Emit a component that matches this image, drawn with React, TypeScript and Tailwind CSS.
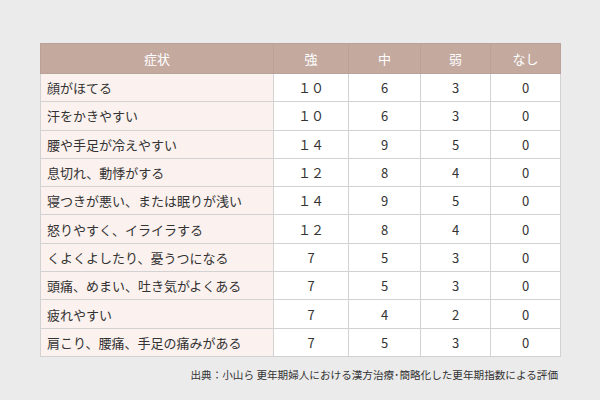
import React from "react";

const rows: [string, string, string, string, string][] = [
  ["顔がほてる", "１０", "6", "3", "0"],
  ["汗をかきやすい", "１０", "6", "3", "0"],
  ["腰や手足が冷えやすい", "１４", "9", "5", "0"],
  ["息切れ、動悸がする", "１２", "8", "4", "0"],
  ["寝つきが悪い、または眠りが浅い", "１４", "9", "5", "0"],
  ["怒りやすく、イライラする", "１２", "8", "4", "0"],
  ["くよくよしたり、憂うつになる", "7", "5", "3", "0"],
  ["頭痛、めまい、吐き気がよくある", "7", "5", "3", "0"],
  ["疲れやすい", "7", "4", "2", "0"],
  ["肩こり、腰痛、手足の痛みがある", "7", "5", "3", "0"],
];

export default function App() {
  return (
    <div
      className="w-[600px] h-[400px] bg-[#ebebeb] text-[#333] pt-[43px] px-[40px]"
      style={{ fontFamily: '"Noto Sans CJK JP", "Noto Sans", sans-serif' }}
    >
      <table className="w-[520px] border-collapse text-[13px] table-fixed">
        <colgroup>
          <col className="w-[233px]" />
          <col className="w-[75px]" />
          <col className="w-[72px]" />
          <col className="w-[70px]" />
          <col className="w-[70px]" />
        </colgroup>
        <thead>
          <tr className="h-[30px] bg-[#c4a99f] text-white">
            <th className="border border-[#b9a29a] font-normal">症状</th>
            <th className="border border-[#b9a29a] font-normal">強</th>
            <th className="border border-[#b9a29a] font-normal">中</th>
            <th className="border border-[#b9a29a] font-normal">弱</th>
            <th className="border border-[#b9a29a] font-normal">なし</th>
          </tr>
        </thead>
        <tbody>
          {rows.map((r, i) => (
            <tr key={i} className="h-[28.3px]">
              <td className="border border-[#d2d2d2] bg-[#fbf1ee] pl-[6px] leading-none">{r[0]}</td>
              {r.slice(1).map((v, j) => (
                <td key={j} className="border border-[#d2d2d2] bg-white text-center leading-none">
                  {v}
                </td>
              ))}
            </tr>
          ))}
        </tbody>
      </table>
      <div className="w-[520px] text-right text-[10.6px] mt-[10px] pr-[2px]">
        出典：小山ら 更年期婦人における漢方治療･簡略化した更年期指数による評価
      </div>
    </div>
  );
}
